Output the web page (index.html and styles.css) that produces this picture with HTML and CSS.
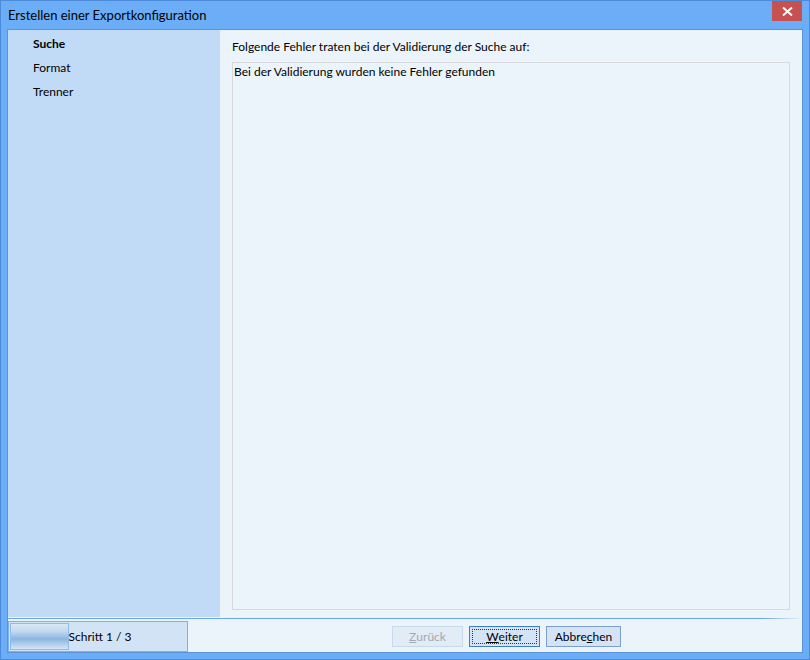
FILE: index.html
```html
<!DOCTYPE html>
<html lang="de">
<head>
<meta charset="utf-8">
<title>Erstellen einer Exportkonfiguration</title>
<link rel="stylesheet" href="styles.css">
</head>
<body>
<div class="window">
  <div class="titlebar">Erstellen einer Exportkonfiguration</div>
  <div class="close-btn">
    <svg width="11" height="9" viewBox="0 0 11 9"><path d="M1 0.5 L10 8.5 M10 0.5 L1 8.5" stroke="#fff" stroke-width="2"/></svg>
  </div>
  <div class="client">
    <div class="main">
      <nav class="sidebar">
        <div class="step active">Suche</div>
        <div class="step">Format</div>
        <div class="step">Trenner</div>
      </nav>
      <section class="content">
        <div class="label">Folgende Fehler traten bei der Validierung der Suche auf:</div>
        <div class="result">Bei der Validierung wurden keine Fehler gefunden</div>
      </section>
    </div>
    <div class="separator"></div>
    <div class="footer">
      <div class="progress">
        <div class="progress-fill"></div>
        <span class="progress-text">Schritt 1 / 3</span>
      </div>
      <div class="buttons">
        <button class="btn disabled"><u>Z</u>urück</button>
        <button class="btn focused"><span class="focus-ring"><u>W</u>eiter</span></button>
        <button class="btn wide">Abbre<u>c</u>hen</button>
      </div>
    </div>
  </div>
</div>
</body>
</html>
```

FILE: styles.css
```css
* { box-sizing: border-box; }
html, body { margin: 0; padding: 0; }
body {
  width: 810px;
  height: 660px;
  font-family: "Segoe UI", Lato, "Open Sans", sans-serif;
  font-size: 12px;
  color: #000;
  background: #6badf6;
}
.window {
  position: relative;
  width: 810px;
  height: 660px;
  background: #6badf6;
  border: 1px solid #4d8bd8;
  display: flex;
  flex-direction: column;
}
.titlebar {
  height: 28px;
  padding-left: 7px;
  line-height: 28px;
  font-size: 13px;
  color: #000;
}
.close-btn {
  position: absolute;
  top: 0;
  right: 7px;
  width: 30px;
  height: 20px;
  background: #c75050;
  display: flex;
  align-items: center;
  justify-content: center;
}
.client {
  margin: 0 6px 0 6px;
  height: 624px;
  border: 1px solid #5a93d6;
  background: #ebf3fb;
  display: flex;
  flex-direction: column;
}
.main {
  height: 588px;
  display: flex;
}
.sidebar {
  width: 212px;
  background: #c1dbf7;
  padding-top: 6px;
  padding-left: 25px;
}
.step {
  height: 24px;
  line-height: 16px;
}
.step.active { font-weight: bold; }
.content {
  flex: 1;
  padding: 9px 0 0 12px;
  display: flex;
  flex-direction: column;
}
.label {
  height: 23px;
  line-height: 16px;
}
.result {
  width: 558px;
  height: 548px;
  border: 1px solid #d6d8db;
  padding: 1px 0 0 1px;
  line-height: 16px;
}
.separator {
  height: 1px;
  margin-top: 1px;
  background: linear-gradient(to right, #6ea7e8 0%, #6ea7e8 95%, rgba(110,167,232,0) 100%);
}
.footer {
  flex: 1;
  display: flex;
  align-items: flex-start;
  padding-top: 2px;
}
.progress {
  position: relative;
  width: 180px;
  height: 31px;
  border: 1px solid #80b0e6;
  background: #d2e3f5;
  display: flex;
  align-items: center;
  justify-content: center;
}
.progress-fill {
  position: absolute;
  left: 1px;
  top: 1px;
  width: 59px;
  height: 27px;
  border: 1px solid #8dbbea;
  background: linear-gradient(to bottom, #dbe8f6 0%, #c2d8ef 30%, #8ab5e2 60%, #b9d3ee 85%, #d6e6f6 100%);
}
.progress-text {
  position: relative;
  line-height: 16px;
  padding-left: 4px;
}
.buttons {
  display: flex;
  gap: 6px;
  margin-left: 204px;
  margin-top: 5px;
}
.btn {
  width: 71px;
  height: 21px;
  padding: 0;
  font-family: inherit;
  font-size: 12px;
  color: #000;
  background: #d4e4f6;
  border: 1px solid #7c9fcc;
  display: flex;
  align-items: center;
  justify-content: center;
}
.btn.wide { width: 75px; }
.btn.disabled {
  color: #a3a9b0;
  background: #e2ecf7;
  border-color: #c6d9ee;
}
.btn.focused { border-color: #3c7dc4; padding: 2px; }
.focus-ring {
  flex: 1;
  align-self: stretch;
  border: 1px dotted #1d3c5e;
  display: flex;
  align-items: center;
  justify-content: center;
}
u { text-decoration: underline; }
```
